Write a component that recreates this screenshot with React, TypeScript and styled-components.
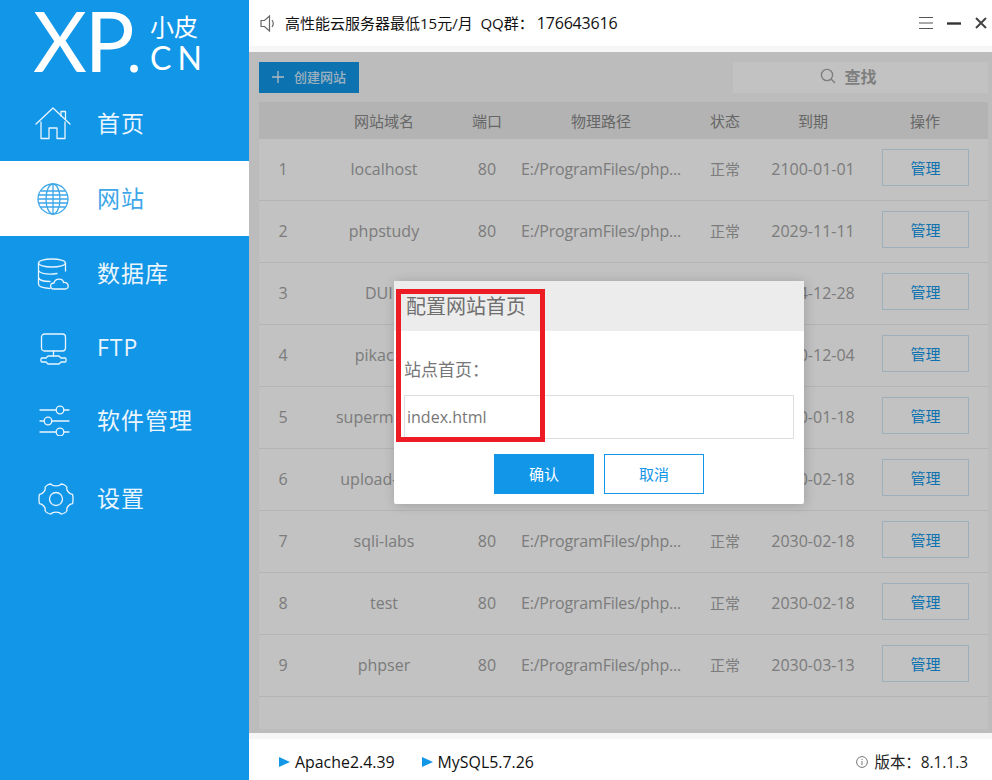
import React from "react";
import styled, { createGlobalStyle } from "styled-components";

const FONT = `"Open Sans", "Noto Sans CJK SC", sans-serif`;
const BLUE = "#1296e8";

const Global = createGlobalStyle`
  html, body { margin: 0; padding: 0; background: #fff; }
  body { font-family: ${FONT}; }
  * { box-sizing: border-box; }
`;

const Root = styled.div`
  display: flex;
  width: 992px;
  height: 780px;
  overflow: hidden;
`;

const Sidebar = styled.aside`
  width: 249px;
  flex: none;
  background: ${BLUE};
  color: #fff;
  display: flex;
  flex-direction: column;
`;

const Logo = styled.div`
  height: 86px;
  padding: 0 0 0 33px;
  display: flex;
  align-items: flex-start;
`;

const LogoMark = styled.div`
  font-family: "Lato", "Open Sans", sans-serif;
  font-weight: 400;
  font-size: 83px;
  line-height: 84px;
  height: 84px;
  margin-top: -2px;
  letter-spacing: -2px;
  width: 117px;
  white-space: nowrap;
`;

const LogoDot = styled.span`
  font-size: 62px;
  margin-left: -6px;
`;

const LogoSide = styled.div`
  display: flex;
  flex-direction: column;
  padding-top: 12px;
  font-size: 24px;
  line-height: 30px;
  white-space: nowrap;
`;

const LogoCn = styled.span`
  font-family: "Lato", sans-serif;
  font-weight: 400;
  font-size: 32px;
  letter-spacing: 6px;
  line-height: 32px;
`;

const NavItem = styled.div<{ $active?: boolean; $lift?: number }>`
  height: 75px;
  display: flex;
  align-items: center;
  padding-bottom: ${(p) => p.$lift ?? 0}px;
  background: ${(p) => (p.$active ? "#fff" : "transparent")};
  color: ${(p) => (p.$active ? "#3ea7ea" : "#eaf5fd")};
`;

const NavIcon = styled.div<{ $shift?: number }>`
  width: 97px;
  flex: none;
  display: flex;
  justify-content: center;
  padding-left: ${(p) => p.$shift ?? 9}px;
  svg { display: block; }
`;

const NavLabel = styled.span`
  font-size: 23px;
  letter-spacing: 1px;
  padding-bottom: 3px;
`;

const Main = styled.main`
  flex: 1;
  display: flex;
  flex-direction: column;
  min-width: 0;
`;

const TopBar = styled.header`
  height: 52px;
  flex: none;
  display: flex;
  align-items: center;
  padding: 0 5px 0 11px;
  border-bottom: 6px solid #f6f6f6;
  background: #fff;
  color: #111;
  font-size: 15px;
`;

const Notice = styled.span`
  margin-left: 10px;
  white-space: pre;
`;

const NoticeNumber = styled.span`
  font-size: 16px;
  letter-spacing: -0.2px;
  margin-left: 3px;
`;

const WinButtons = styled.div`
  margin-left: auto;
  display: flex;
  align-items: center;
  gap: 14px;
  svg { display: block; }
`;

const Content = styled.section`
  flex: 1;
  position: relative;
  padding: 10px 4px 4px 10px;
  background: #f8f8f8;
  display: flex;
  flex-direction: column;
  min-height: 0;
`;

const Toolbar = styled.div`
  height: 31px;
  flex: none;
  display: flex;
  justify-content: space-between;
  margin-bottom: 9px;
`;

const CreateButton = styled.div`
  width: 100px;
  height: 31px;
  background: ${BLUE};
  color: #cfe9fb;
  font-size: 13px;
  font-weight: 500;
  display: flex;
  align-items: center;
  padding: 0 0 2px 12px;
  gap: 9px;
`;

const SearchBox = styled.div`
  width: 255px;
  height: 31px;
  background: #ffffff;
  display: flex;
  align-items: center;
  justify-content: center;
  padding: 0 24px 3px 0;
  gap: 8px;
  color: #a8a8a8;
  font-size: 16px;
  font-weight: 600;
`;

const Table = styled.div`
  flex: 1;
  background: #ffffff;
  display: flex;
  flex-direction: column;
`;

const columns = "48px 154px 52px 176px 72px 104px 120px 3px";

const HeadRow = styled.div`
  height: 37px;
  flex: none;
  display: grid;
  grid-template-columns: ${columns};
  align-items: center;
  background: #ececec;
  color: #888;
  font-size: 15px;
  text-align: center;
`;

const Row = styled.div`
  height: 62px;
  flex: none;
  display: grid;
  grid-template-columns: ${columns};
  align-items: center;
  border-bottom: 1px solid #ededed;
  color: #a3a3a3;
  font-size: 16px;
  text-align: center;
  white-space: nowrap;
`;

const Cell = styled.div<{ $cjk?: boolean; $tight?: boolean }>`
  font-size: ${(p) => (p.$cjk ? "15px" : "inherit")};
  letter-spacing: ${(p) => (p.$tight ? "-0.2px" : "normal")};
  padding-bottom: 2px;
`;

const ManageButton = styled.div`
  width: 87px;
  height: 37px;
  margin: 0 0 4px 17px;
  border: 1px solid #cfe6f5;
  color: ${BLUE};
  font-size: 15px;
  display: flex;
  align-items: center;
  justify-content: center;
`;

const Overlay = styled.div`
  position: absolute;
  inset: 0;
  background: rgba(0, 0, 0, 0.24);
`;

const Modal = styled.div`
  position: absolute;
  left: 145px;
  top: 229px;
  width: 410px;
  height: 223px;
  background: #fff;
  border-radius: 2px;
  box-shadow: 1px 1px 12px rgba(0, 0, 0, 0.18);
  color: #777;
`;

const ModalHead = styled.div`
  height: 50px;
  background: #ececec;
  padding-left: 12px;
  font-size: 20px;
  line-height: 52px;
  color: #6f6f6f;
`;

const ModalBody = styled.div`
  padding: 24px 10px 0;
`;

const FieldLabel = styled.div`
  font-size: 17px;
  line-height: 30px;
  height: 40px;
`;

const FieldInput = styled.div`
  height: 44px;
  border: 1px solid #dedede;
  font-size: 16px;
  line-height: 42px;
  padding-left: 2px;
  color: #777;
`;

const ModalActions = styled.div`
  display: flex;
  justify-content: center;
  gap: 10px;
  margin-top: 15px;
`;

const DialogButton = styled.div<{ $primary?: boolean }>`
  width: 100px;
  height: 40px;
  display: flex;
  align-items: center;
  justify-content: center;
  padding-bottom: 2px;
  font-size: 15px;
  background: ${(p) => (p.$primary ? BLUE : "#fff")};
  color: ${(p) => (p.$primary ? "#fff" : BLUE)};
  border: 1px solid ${BLUE};
`;

const Annotation = styled.div`
  position: absolute;
  left: 147px;
  top: 237px;
  width: 149px;
  height: 153px;
  border: 5px solid #ed1c24;
`;

const BottomBar = styled.footer`
  height: 47px;
  flex: none;
  border-top: 6px solid #f6f6f6;
  background: #fff;
  display: flex;
  align-items: center;
  padding: 4px 24px 0 30px;
  font-size: 15.9px;
  color: #111;
`;

const Service = styled.div`
  display: flex;
  align-items: center;
  gap: 5px;
  margin-right: 27px;
  white-space: nowrap;
`;

const Triangle = styled.span`
  width: 0;
  height: 0;
  border-left: 11px solid ${BLUE};
  border-top: 5.5px solid transparent;
  border-bottom: 5.5px solid transparent;
`;

const Version = styled.div`
  margin-left: auto;
  display: flex;
  align-items: center;
  gap: 6px;
  font-size: 15.4px;
  white-space: nowrap;
  color: #222;
`;

const Line = { fill: "none", stroke: "currentColor", strokeWidth: 1.3, strokeLinecap: "round", strokeLinejoin: "round" } as const;

const HomeIcon = () => (
  <svg width="36" height="33" viewBox="0 0 36 33" {...Line}>
    <path d="M1 17 L18 1 L35 17" />
    <path d="M26 9 V4.5 H30.5 V12" />
    <path d="M6 15 V31.5 H14 V21 H22 V31.5 H30 V15" />
  </svg>
);
const GlobeIcon = () => (
  <svg width="32" height="32" viewBox="0 0 32 32" {...Line}>
    <circle cx="16" cy="16" r="15" />
    <ellipse cx="16" cy="16" rx="7" ry="15" />
    <path d="M16 1 V31 M1.5 16 H30.5 M4 8 H28 M4 24 H28 M1.7 12 H30.3 M1.7 20 H30.3" />
  </svg>
);
const DbIcon = () => (
  <svg width="33" height="32" viewBox="0 0 33 32" {...Line}>
    <ellipse cx="15" cy="5" rx="13.5" ry="4" />
    <path d="M1.5 5 V26 C1.5 29 6 30 13 30.5 M28.5 5 V13 M1.5 12 C2 15.5 10 17 20 15.5 M1.5 19.5 C2 22 6 23.5 13 23.5" />
    <path d="M17 31 C12.5 31 12.5 25 17 25 C18 20 26 20 26.5 24.5 C32 24 33 31 28 31 Z" />
  </svg>
);
const FtpIcon = () => (
  <svg width="27" height="32" viewBox="0 0 27 32" {...Line}>
    <rect x="1.5" y="1" width="24" height="17" rx="3" />
    <path d="M13.5 18 V23" />
    <path d="M8 23 H19 L21 25 H25 Q26 25 26 26 V28 Q26 29 25 29 H21 L19 31 H8 L6 29 H2 Q1 29 1 28 V26 Q1 25 2 25 H6 Z" />
  </svg>
);
const SlidersIcon = () => (
  <svg width="31" height="31" viewBox="0 0 31 31" {...Line}>
    <path d="M1 5 H17 M25 5 H30 M1 16 H5 M13 16 H30 M1 27 H17 M25 27 H30" />
    <circle cx="21" cy="5" r="3.8" />
    <circle cx="9" cy="16" r="3.8" />
    <circle cx="21" cy="27" r="3.8" />
  </svg>
);
const GearIcon = () => (
  <svg width="36" height="34" viewBox="0 0 36 34" {...Line}>
    <circle cx="18" cy="17" r="6.5" />
    <path d="M13 2 C14.5 4.5 21.5 4.5 23 2 C25 2 28 3.7 29 5.5 C28 8 31 12 34.5 12.3 C35.2 14 35.2 20 34.5 21.7 C31 22 28 26 29 28.5 C28 30.3 25 32 23 32 C21.5 29.5 14.5 29.5 13 32 C11 32 8 30.3 7 28.5 C8 26 5 22 1.5 21.7 C0.8 20 0.8 14 1.5 12.3 C5 12 8 8 7 5.5 C8 3.7 11 2 13 2 Z" />
  </svg>
);

const nav = [
  { label: "首页", icon: <HomeIcon /> },
  { label: "网站", icon: <GlobeIcon />, active: true },
  { label: "数据库", icon: <DbIcon /> },
  { label: "FTP", icon: <FtpIcon /> },
  { label: "软件管理", icon: <SlidersIcon />, lift: 6, shift: 11 },
  { label: "设置", icon: <GearIcon />, shift: 14 },
];

const PATH = "E:/ProgramFiles/php...";
const rows = [
  ["1", "localhost", "2100-01-01"],
  ["2", "phpstudy", "2029-11-11"],
  ["3", "DUIB", "2024-12-28"],
  ["4", "pikachu", "2030-12-04"],
  ["5", "supermarket", "2030-01-18"],
  ["6", "upload-labs", "2030-02-18"],
  ["7", "sqli-labs", "2030-02-18"],
  ["8", "test", "2030-02-18"],
  ["9", "phpser", "2030-03-13"],
];

export default function App() {
  return (
    <Root>
      <Global />
      <Sidebar>
        <Logo>
          <LogoMark>
            XP<LogoDot>.</LogoDot>
          </LogoMark>
          <LogoSide>
            <span>小皮</span>
            <LogoCn>CN</LogoCn>
          </LogoSide>
        </Logo>
        {nav.map((n) => (
          <NavItem key={n.label} $active={n.active} $lift={n.lift}>
            <NavIcon $shift={n.shift}>{n.icon}</NavIcon>
            <NavLabel>{n.label}</NavLabel>
          </NavItem>
        ))}
      </Sidebar>
      <Main>
        <TopBar>
          <svg width="15" height="17" viewBox="0 0 15 17" fill="none" stroke="#666" strokeWidth="1.2">
            <path d="M1 5.5 H4.5 L9.5 1 V16 L4.5 11.5 H1 Z" />
            <path d="M12 5 Q14.5 8.5 12 12" />
          </svg>
          <Notice>
            高性能云服务器最低15元/月  QQ群：<NoticeNumber>176643616</NoticeNumber>
          </Notice>
          <WinButtons>
            <svg width="14" height="12" viewBox="0 0 14 12" stroke="#555" strokeWidth="1">
              <path d="M0 .5 H14 M0 6 H14 M0 11.5 H14" />
            </svg>
            <svg width="14" height="3" viewBox="0 0 14 3" stroke="#333" strokeWidth="2.4">
              <path d="M0 1.5 H14" />
            </svg>
            <svg width="12" height="12" viewBox="0 0 12 12" stroke="#444" strokeWidth="2">
              <path d="M1 1 L11 11 M11 1 L1 11" />
            </svg>
          </WinButtons>
        </TopBar>
        <Content>
          <Toolbar>
            <CreateButton>
              <svg width="14" height="14" viewBox="0 0 14 14" stroke="#e8f4fd" strokeWidth="1.3">
                <path d="M7 1 V13 M1 7 H13" />
              </svg>
              创建网站
            </CreateButton>
            <SearchBox>
              <svg width="16" height="16" viewBox="0 0 16 16" fill="none" stroke="#a6a6a6" strokeWidth="1.4">
                <circle cx="7" cy="7" r="5.6" />
                <path d="M11 11 L15 15" />
              </svg>
              查找
            </SearchBox>
          </Toolbar>
          <Table>
            <HeadRow>
              <span />
              <span>网站域名</span>
              <span>端口</span>
              <span>物理路径</span>
              <span>状态</span>
              <span>到期</span>
              <span>操作</span>
            </HeadRow>
            {rows.map(([i, name, date]) => (
              <Row key={i}>
                <Cell>{i}</Cell>
                <Cell>{name}</Cell>
                <Cell>80</Cell>
                <Cell $tight>{PATH}</Cell>
                <Cell $cjk>正常</Cell>
                <Cell>{date}</Cell>
                <ManageButton>管理</ManageButton>
              </Row>
            ))}
          </Table>
          <Overlay />
          <Modal>
            <ModalHead>配置网站首页</ModalHead>
            <ModalBody>
              <FieldLabel>站点首页：</FieldLabel>
              <FieldInput>index.html</FieldInput>
              <ModalActions>
                <DialogButton $primary>确认</DialogButton>
                <DialogButton>取消</DialogButton>
              </ModalActions>
            </ModalBody>
          </Modal>
          <Annotation />
        </Content>
        <BottomBar>
          <Service>
            <Triangle />
            Apache2.4.39
          </Service>
          <Service>
            <Triangle />
            MySQL5.7.26
          </Service>
          <Version>
            <svg width="12" height="12" viewBox="0 0 12 12" fill="none" stroke="#777" strokeWidth="1">
              <circle cx="6" cy="6" r="5.4" />
              <path d="M6 5 V9 M6 3 V4" />
            </svg>
            版本：8.1.1.3
          </Version>
        </BottomBar>
      </Main>
    </Root>
  );
}
